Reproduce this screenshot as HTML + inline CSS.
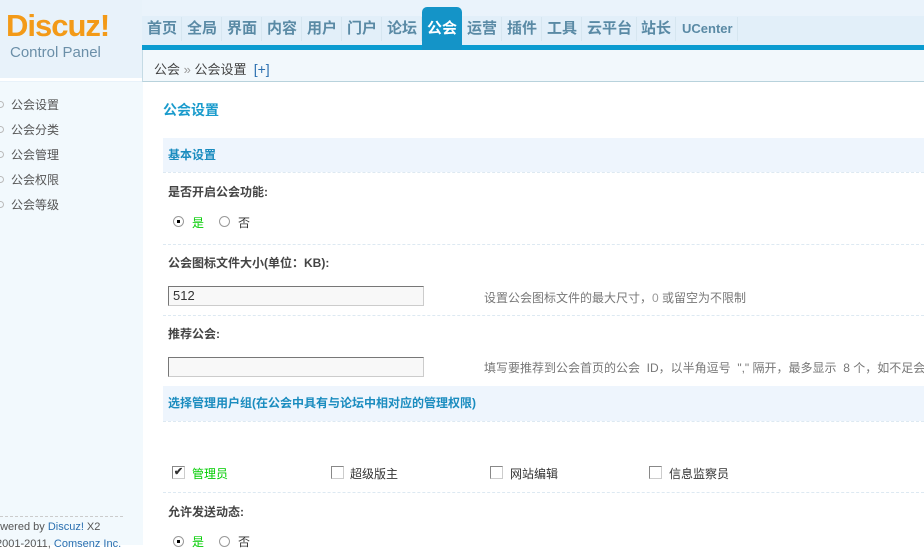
<!DOCTYPE html>
<html><head><meta charset="utf-8"><style>
*{margin:0;padding:0;box-sizing:border-box}
body{width:924px;height:545px;overflow:hidden;background:#fff;font:12px "Liberation Sans","Noto Sans CJK SC",sans-serif;color:#333;position:relative}
.a{position:absolute;white-space:nowrap}
.nav{top:17px;height:24px;line-height:24px;font-size:15px;font-weight:bold;color:#5a8aa5;border-right:1px solid #d6e6f0;padding:0 4px}
.side{left:0;font-size:12px;color:#555}
.side:before{content:"";display:inline-block;width:5px;height:5px;border:1px solid #bbb;border-radius:50%;margin-right:7px;margin-left:-3px;vertical-align:1px}
.dash{left:163px;width:761px;border-top:1px dashed #dde9f2;height:0}
.lab{left:168px;font-weight:bold;color:#444}
.inp{left:168px;width:256px;height:20px;border:1px solid #999;border-color:#777 #ccc #ccc #777;background:#f8f8f8;padding-left:4px;line-height:18px;font-size:13px}
.tip{left:484px;color:#777}
.rad{width:11px;height:11px;border:1px solid #999;border-radius:50%;background:#fff}
.chk{width:13px;height:13px;border:1px solid #888;border-color:#888 #ccc #ccc #888;background:#fff}
.sec{left:163px;width:761px;background:#eef5fd;color:#1a8cbf;font-weight:bold;padding-left:5px}
</style></head><body>
<div class="a" style="left:0;top:0;width:924px;height:50px;background:#eaf3fb"></div>
<div class="a" style="left:0;top:16px;width:924px;height:30px;background:#e2eff9"></div>
<div class="a" style="left:0;top:0;width:142px;height:82px;background:#e8f2fa"></div>
<div class="a" style="left:6px;top:8px;font-size:31px;font-weight:bold;color:#f39a18;letter-spacing:-1px">Discuz!</div>
<div class="a" style="left:10px;top:44px;font-size:15px;color:#6b8fa8">Control Panel</div>
<div class="a" style="left:142px;top:45px;width:782px;height:5px;background:#0a9bd0"></div>
<div class="a" style="left:422px;top:7px;width:40px;height:43px;background:#1494c8;border-radius:5px 5px 0 0"></div>
<div class="a nav" style="left:143px">首页</div>
<div class="a nav" style="left:183px">全局</div>
<div class="a nav" style="left:223px">界面</div>
<div class="a nav" style="left:263px">内容</div>
<div class="a nav" style="left:303px">用户</div>
<div class="a nav" style="left:343px">门户</div>
<div class="a nav" style="left:383px">论坛</div>
<div class="a nav" style="left:423px;color:#fff;border:0">公会</div>
<div class="a nav" style="left:463px">运营</div>
<div class="a nav" style="left:503px">插件</div>
<div class="a nav" style="left:543px">工具</div>
<div class="a nav" style="left:583px">云平台</div>
<div class="a nav" style="left:637px">站长</div>
<div class="a nav" style="left:678px;font-size:13px">UCenter</div>
<div class="a" style="left:142px;top:50px;width:782px;height:32px;background:#f2f8fc;border-bottom:1px solid #b8d2dc;border-left:1px solid #c5dbe5"></div>
<div class="a" style="left:0;top:78px;width:142px;height:3px;background:#fff"></div>
<div class="a" style="left:154px;top:59px;color:#444;font-size:13px">公会 <span style="color:#999">»</span> 公会设置 &nbsp;<span style="color:#2a6fb0;font-size:14px">[+]</span></div>
<div class="a" style="left:0;top:82px;width:143px;height:463px;background:#f2f9fd"></div>
<div class="a side" style="top:96px">公会设置</div>
<div class="a side" style="top:121px">公会分类</div>
<div class="a side" style="top:146px">公会管理</div>
<div class="a side" style="top:171px">公会权限</div>
<div class="a side" style="top:196px">公会等级</div>
<div class="a" style="left:0;top:516px;width:123px;border-top:1px dashed #ccc"></div>
<div class="a" style="left:-6px;top:521px;color:#555;font-size:11px">owered by <span style="color:#2a6fb0">Discuz!</span> X2</div>
<div class="a" style="left:-4px;top:538px;color:#555;font-size:11px">2001-2011, <span style="color:#2a6fb0">Comsenz Inc.</span></div>

<div class="a" style="left:163px;top:100px;font-size:14px;font-weight:bold;color:#1a9bcc">公会设置</div>
<div class="a sec" style="top:138px;height:34px;line-height:34px">基本设置</div>
<div class="a dash" style="top:172px"></div>
<div class="a lab" style="top:183px">是否开启公会功能:</div>
<div class="a rad" style="left:173px;top:216px"><div style="width:3px;height:3px;background:#000;margin:3px"></div></div>
<div class="a" style="left:192px;top:214px;color:#0c0">是</div>
<div class="a rad" style="left:219px;top:216px"></div>
<div class="a" style="left:238px;top:214px">否</div>
<div class="a dash" style="top:244px"></div>
<div class="a lab" style="top:254px">公会图标文件大小(单位：KB):</div>
<div class="a inp" style="top:286px">512</div>
<div class="a tip" style="top:289px">设置公会图标文件的最大尺寸，<span style="color:#999">0</span> 或留空为不限制</div>
<div class="a dash" style="top:315px"></div>
<div class="a lab" style="top:325px">推荐公会:</div>
<div class="a inp" style="top:357px"></div>
<div class="a tip" style="top:359px">填写要推荐到公会首页的公会 &nbsp;ID，以半角逗号 &nbsp;"," 隔开，最多显示 &nbsp;8 个，如不足会</div>
<div class="a sec" style="top:386px;height:35px;line-height:35px">选择管理用户组(在公会中具有与论坛中相对应的管理权限)</div>
<div class="a dash" style="top:421px"></div>
<div class="a chk" style="left:172px;top:466px;font-size:11px;line-height:11px;font-weight:bold;text-align:center">✔</div>
<div class="a" style="left:192px;top:465px;color:#0c0">管理员</div>
<div class="a chk" style="left:331px;top:466px"></div>
<div class="a" style="left:350px;top:465px">超级版主</div>
<div class="a chk" style="left:490px;top:466px"></div>
<div class="a" style="left:510px;top:465px">网站编辑</div>
<div class="a chk" style="left:649px;top:466px"></div>
<div class="a" style="left:669px;top:465px">信息监察员</div>
<div class="a dash" style="top:492px"></div>
<div class="a lab" style="top:503px">允许发送动态:</div>
<div class="a rad" style="left:173px;top:536px"><div style="width:3px;height:3px;background:#000;margin:3px"></div></div>
<div class="a" style="left:192px;top:533px;color:#0c0">是</div>
<div class="a rad" style="left:219px;top:536px"></div>
<div class="a" style="left:238px;top:533px">否</div>
</body></html>
